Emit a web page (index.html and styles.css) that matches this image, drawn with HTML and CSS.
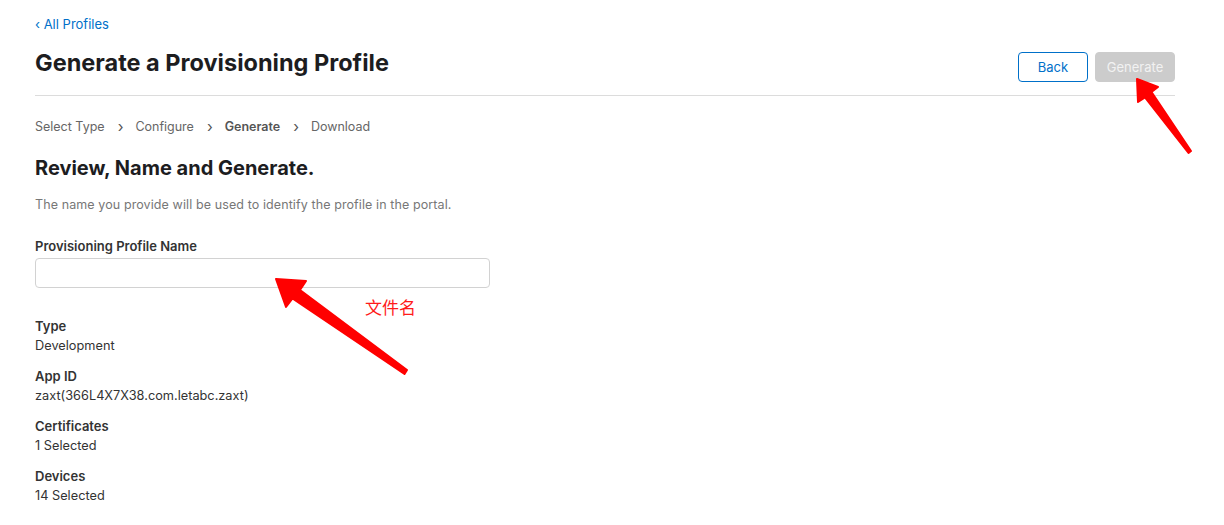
FILE: index.html
```html
<!DOCTYPE html>
<html>
<head>
<meta charset="utf-8">
<link rel="stylesheet" href="styles.css">
</head>
<body>
<div class="page">
  <a class="back-link" href="#">&#8249; All Profiles</a>
  <div class="header">
    <h1 class="title">Generate a Provisioning Profile</h1>
    <div class="actions">
      <button class="btn btn-outline">Back</button>
      <button class="btn btn-disabled">Generate</button>
    </div>
  </div>
  <div class="steps">
    <span class="step">Select Type</span><span class="chev">&#8250;</span>
    <span class="step">Configure</span><span class="chev">&#8250;</span>
    <span class="step current">Generate</span><span class="chev">&#8250;</span>
    <span class="step">Download</span>
  </div>
  <h2 class="section-title">Review, Name and Generate.</h2>
  <p class="desc">The name you provide will be used to identify the profile in the portal.</p>
  <label class="field-label">Provisioning Profile Name</label>
  <input class="text-input" type="text">
  <div class="details">
    <div class="group"><div class="g-label">Type</div><div class="g-value">Development</div></div>
    <div class="group"><div class="g-label">App ID</div><div class="g-value">zaxt(366L4X7X38.com.letabc.zaxt)</div></div>
    <div class="group"><div class="g-label">Certificates</div><div class="g-value">1 Selected</div></div>
    <div class="group"><div class="g-label">Devices</div><div class="g-value">14 Selected</div></div>
  </div>
</div>
<div class="note">文件名</div>
<svg class="annot" width="1224" height="525" viewBox="0 0 1224 525">
  <polygon fill="#ff0000" stroke="#ff0000" stroke-width="2" stroke-linejoin="round"
    points="276,279 306,281 300,290 407,370 404.5,374 292.5,298.5 286,307"/>
  <polygon fill="#ff0000" stroke="#ff0000" stroke-width="2" stroke-linejoin="round"
    points="1137,79 1158,87 1151.5,92 1191,151 1188.5,153 1145,97.5 1138,102"/>
</svg>
</body>
</html>
```

FILE: styles.css
```css
* { box-sizing: border-box; }
html, body { margin: 0; padding: 0; background: #fff; }
body {
  font-family: Inter, "Noto Sans", "Liberation Sans", sans-serif;
  color: #333;
  width: 1224px;
  height: 525px;
  overflow: hidden;
  position: relative;
}
.page {
  padding: 15px 49px 0 35px;
  display: flex;
  flex-direction: column;
  align-items: flex-start;
}
.back-link {
  font-size: 13px;
  line-height: 18px;
  color: #0070c9;
  text-decoration: none;
}
.header {
  align-self: stretch;
  display: flex;
  justify-content: space-between;
  align-items: flex-start;
  padding: 16px 0 13px;
  border-bottom: 1px solid #dcdcdc;
}
.title {
  margin: 0;
  font-size: 23.5px;
  line-height: 28px;
  font-weight: 700;
  color: #1d1d1f;
  letter-spacing: 0;
}
.actions {
  display: flex;
  gap: 7px;
  margin-top: 3px;
}
.btn {
  height: 30px;
  border-radius: 4px;
  font-family: inherit;
  font-size: 13px;
  padding: 0;
}
.btn-outline {
  width: 70px;
  background: #fff;
  border: 1px solid #0070c9;
  color: #0070c9;
}
.btn-disabled {
  width: 80px;
  background: #cccccc;
  border: 1px solid #cccccc;
  color: #f2f2f2;
}
.steps {
  margin-top: 22px;
  font-size: 12.5px;
  line-height: 18px;
  color: #666;
  display: flex;
  align-items: center;
}
.step.current { font-weight: 600; color: #555; }
.chev { margin: 0 12px 0 13px; font-size: 15px; color: #555; }
.section-title {
  margin: 20px 0 0;
  font-size: 20px;
  line-height: 24px;
  font-weight: 700;
  color: #1d1d1f;
}
.desc {
  margin: 17px 0 0;
  font-size: 12.5px;
  line-height: 16px;
  color: #777;
  letter-spacing: 0.1px;
}
.field-label {
  margin-top: 25px;
  font-size: 13px;
  line-height: 16px;
  font-weight: 600;
  color: #333;
}
.text-input {
  margin-top: 4px;
  width: 455px;
  height: 30px;
  border: 1px solid #d2d2d2;
  border-radius: 4px;
  background: #fff;
}
.details {
  margin-top: 29px;
  display: flex;
  flex-direction: column;
  gap: 11px;
}
.g-label {
  font-size: 13px;
  line-height: 18px;
  font-weight: 600;
  color: #333;
}
.g-value {
  margin-top: 1px;
  font-size: 12.75px;
  line-height: 20px;
  color: #333;
}
.note {
  position: absolute;
  left: 365px;
  top: 295px;
  font-family: "Noto Sans CJK SC", sans-serif;
  font-size: 17px;
  line-height: 24px;
  color: #ff1a1a;
}
.annot {
  position: absolute;
  left: 0;
  top: 0;
  pointer-events: none;
}
```
